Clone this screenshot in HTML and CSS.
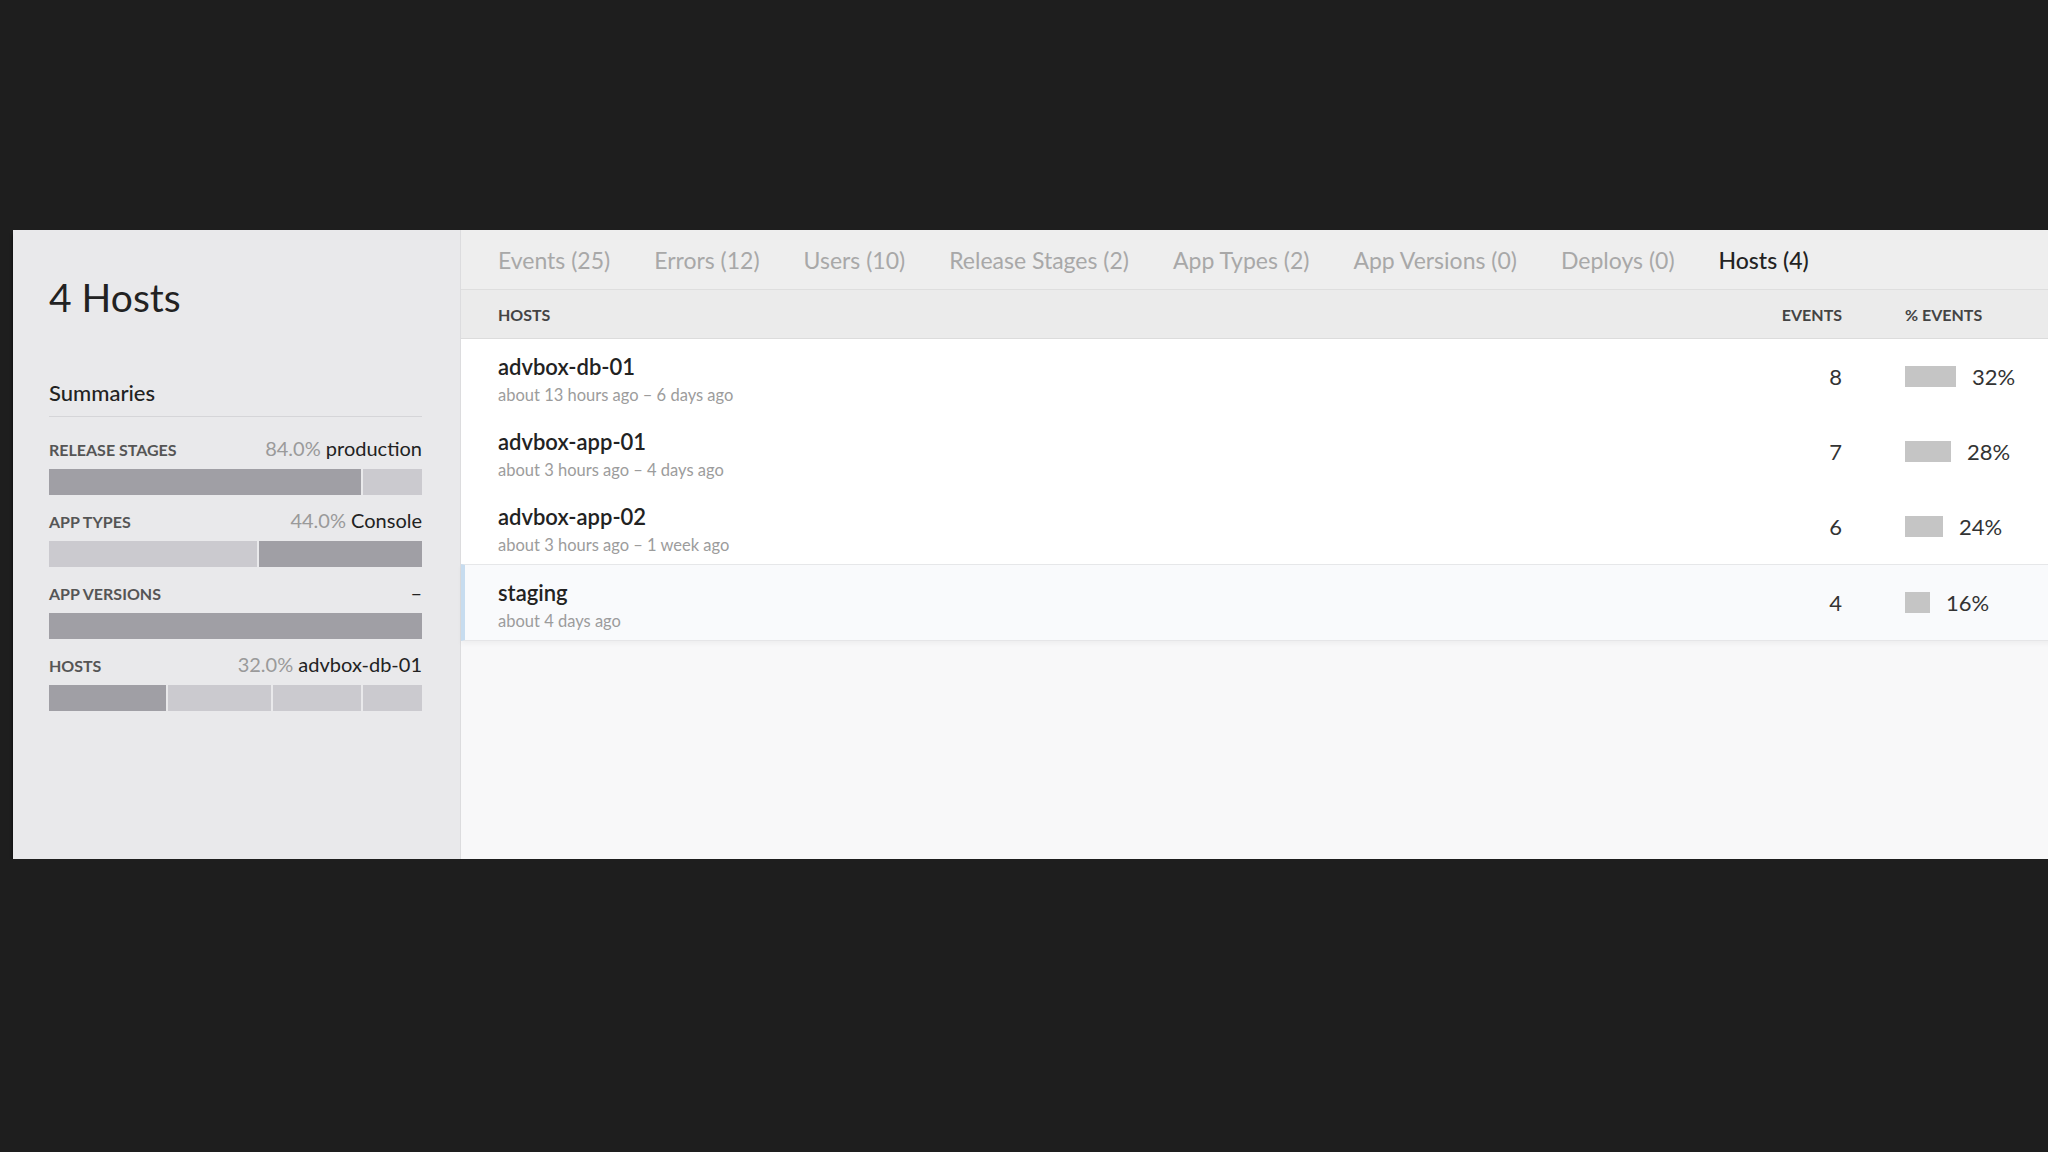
FILE: index.html
```html
<!DOCTYPE html>
<html>
<head>
  <title>Hosts</title>
  <link rel="stylesheet" href="styles.css">
</head>
<body>
  <div class="panel">
    <aside class="sidebar">
      <h1 class="title">4 Hosts</h1>
      <h2 class="subtitle">Summaries</h2>

      <div class="summary">
        <div class="summary-head">
          <span class="summary-label">Release Stages</span>
          <span class="summary-value"><span class="summary-pct">84.0%</span> production</span>
        </div>
        <div class="summary-bar">
          <span class="seg seg-dark" style="flex: 84"></span>
          <span class="seg seg-light" style="flex: 16"></span>
        </div>
      </div>

      <div class="summary">
        <div class="summary-head">
          <span class="summary-label">App Types</span>
          <span class="summary-value"><span class="summary-pct">44.0%</span> Console</span>
        </div>
        <div class="summary-bar">
          <span class="seg seg-light" style="flex: 56"></span>
          <span class="seg seg-dark" style="flex: 44"></span>
        </div>
      </div>

      <div class="summary">
        <div class="summary-head">
          <span class="summary-label">App Versions</span>
          <span class="summary-value">&ndash;</span>
        </div>
        <div class="summary-bar">
          <span class="seg seg-dark" style="flex: 100"></span>
        </div>
      </div>

      <div class="summary">
        <div class="summary-head">
          <span class="summary-label">Hosts</span>
          <span class="summary-value"><span class="summary-pct">32.0%</span> advbox-db-01</span>
        </div>
        <div class="summary-bar">
          <span class="seg seg-dark" style="flex: 32"></span>
          <span class="seg seg-light" style="flex: 28"></span>
          <span class="seg seg-light" style="flex: 24"></span>
          <span class="seg seg-light" style="flex: 16"></span>
        </div>
      </div>
    </aside>

    <main class="main">
      <nav class="tabs">
        <a class="tab">Events (25)</a>
        <a class="tab">Errors (12)</a>
        <a class="tab">Users (10)</a>
        <a class="tab">Release Stages (2)</a>
        <a class="tab">App Types (2)</a>
        <a class="tab">App Versions (0)</a>
        <a class="tab">Deploys (0)</a>
        <a class="tab active">Hosts (4)</a>
      </nav>

      <div class="table">
        <div class="table-head">
          <span class="col-host">Hosts</span>
          <span class="col-events">Events</span>
          <span class="col-pct">% Events</span>
        </div>

        <div class="row">
          <div class="col-host">
            <div class="host-name">advbox-db-01</div>
            <div class="host-time">about 13 hours ago &ndash; 6 days ago</div>
          </div>
          <div class="col-events">8</div>
          <div class="col-pct"><span class="pct-bar" style="width: 51px"></span>32%</div>
        </div>

        <div class="row">
          <div class="col-host">
            <div class="host-name">advbox-app-01</div>
            <div class="host-time">about 3 hours ago &ndash; 4 days ago</div>
          </div>
          <div class="col-events">7</div>
          <div class="col-pct"><span class="pct-bar" style="width: 46px"></span>28%</div>
        </div>

        <div class="row">
          <div class="col-host">
            <div class="host-name">advbox-app-02</div>
            <div class="host-time">about 3 hours ago &ndash; 1 week ago</div>
          </div>
          <div class="col-events">6</div>
          <div class="col-pct"><span class="pct-bar" style="width: 38px"></span>24%</div>
        </div>

        <div class="row selected">
          <div class="col-host">
            <div class="host-name">staging</div>
            <div class="host-time">about 4 days ago</div>
          </div>
          <div class="col-events">4</div>
          <div class="col-pct"><span class="pct-bar" style="width: 25px"></span>16%</div>
        </div>
      </div>
    </main>
  </div>
</body>
</html>
```

FILE: styles.css
```css
body {
  font-family: Lato, "Open Sans", sans-serif;
  margin: 0;
  padding: 230px 0 0 13px;
  background-color: #1e1e1e;
  color: #222;
  overflow: hidden;
}

/* the panel runs past the right edge of the window */
.panel {
  display: flex;
  width: 2059px;
  height: 629px;
  background-color: #f8f8f9;
  box-shadow: 0 4px 3px rgba(0, 0, 0, 0.8);
}

/* sidebar */

.sidebar {
  flex-shrink: 0;
  width: 373px;
  padding: 43px 38px 0 36px;
  background-color: #e9e9eb;
  border-right: 1px solid #dcdcde;
}

.title {
  margin: 0;
  font-size: 39px;
  font-weight: 400;
  line-height: 48px;
  color: #222;
}

.subtitle {
  margin: 58px 0 21px 0;
  padding-bottom: 9px;
  font-size: 22px;
  font-weight: 500;
  line-height: 28px;
  border-bottom: 1px solid #d5d5d8;
}

.summary {
  margin-bottom: 15px;
}

.summary-head {
  display: flex;
  justify-content: space-between;
  align-items: baseline;
  height: 20px;
  line-height: 20px;
}

.summary-label {
  font-size: 16px;
  font-weight: 700;
  text-transform: uppercase;
  color: #555;
}

.summary-value {
  font-size: 20px;
  color: #222;
}

.summary-pct {
  color: #9a9a9a;
}

.summary-bar {
  display: flex;
  gap: 2px;
  height: 26px;
  margin-top: 11px;
}

.seg {
  display: block;
  height: 100%;
}

.seg-dark {
  background-color: #a09fa5;
}

.seg-light {
  background-color: #cbcacf;
}

/* main */

.main {
  flex: 1;
  min-width: 0;
}

.tabs {
  display: flex;
  gap: 44px;
  padding: 16px 37px 15px 37px;
  background-color: #eeeeee;
  border-bottom: 1px solid #dedede;
}

.tab {
  font-size: 23px;
  line-height: 28px;
  color: #a8a8a8;
  white-space: nowrap;
  cursor: pointer;
}

.tab.active {
  color: #222;
  font-weight: 500;
}

.table-head {
  display: flex;
  align-items: center;
  padding: 15px 0 13px 37px;
  background-color: #ebebeb;
  border-bottom: 1px solid #dcdcdc;
  font-size: 16px;
  font-weight: 700;
  line-height: 20px;
  text-transform: uppercase;
  color: #444;
}

.col-host {
  flex: 1;
}

.col-events {
  width: 120px;
  text-align: right;
}

.col-pct {
  width: 230px;
  padding-left: 63px;
  box-sizing: border-box;
  display: flex;
  align-items: center;
}

.row {
  display: flex;
  align-items: center;
  padding: 15px 0 9px 37px;
  background-color: #fff;
}

.row .col-events,
.row .col-pct {
  margin-bottom: 6px;
  font-size: 22px;
  color: #333;
}

.row.selected {
  padding-left: 33px;
  background-color: #f9fafc;
  border-top: 1px solid #e6e7e9;
  border-left: 4px solid #c7dcef;
  border-bottom: 1px solid #e6e6e8;
  box-shadow: 0 3px 5px rgba(0, 0, 0, 0.04);
}

.host-name {
  font-size: 22px;
  font-weight: 600;
  line-height: 26px;
  color: #222;
}

.host-time {
  margin-top: 5px;
  font-size: 16.5px;
  line-height: 20px;
  color: #9c9c9c;
}

.pct-bar {
  display: inline-block;
  flex-shrink: 0;
  height: 21px;
  margin-right: 16px;
  background-color: #c5c5c5;
}
```
